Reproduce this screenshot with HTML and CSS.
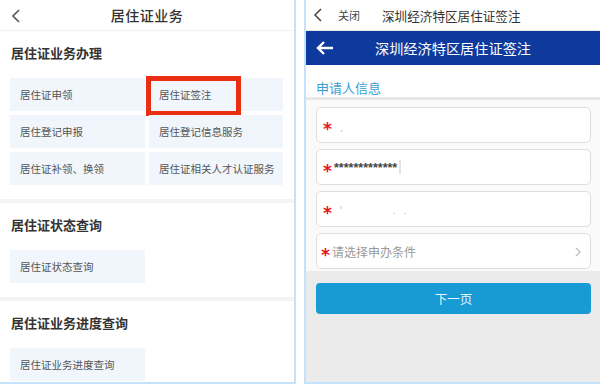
FILE: index.html
```html
<!DOCTYPE html>
<html lang="zh-CN">
<head>
    <meta charset="UTF-8">
    <meta name="viewport" content="width=device-width, initial-scale=1.0">
    <title>居住证业务</title>
    <link rel="stylesheet" href="styles.css">
</head>
<body>
    <div class="panel panel-left">
        <div class="topbar">
            <svg class="back" width="10" height="14" viewBox="0 0 10 14"><path d="M8 1 L2 7 L8 13" fill="none" stroke="#555" stroke-width="1.6"/></svg>
            <h1>居住证业务</h1>
        </div>

        <div class="section">
            <h2>居住证业务办理</h2>
            <div class="grid">
                <div class="cell">居住证申领</div>
                <div class="cell highlight">居住证签注<span class="mark"></span></div>
                <div class="cell">居住登记申报</div>
                <div class="cell">居住登记信息服务</div>
                <div class="cell">居住证补领、换领</div>
                <div class="cell">居住证相关人才认证服务</div>
            </div>
        </div>
        <div class="divider"></div>

        <div class="section">
            <h2>居住证状态查询</h2>
            <div class="grid">
                <div class="cell">居住证状态查询</div>
            </div>
        </div>
        <div class="divider"></div>

        <div class="section last">
            <h2>居住证业务进度查询</h2>
            <div class="grid">
                <div class="cell">居住证业务进度查询</div>
            </div>
        </div>
    </div>

    <div class="panel panel-right">
        <div class="navbar">
            <svg class="back" width="10" height="14" viewBox="0 0 10 14"><path d="M8 1 L2 7 L8 13" fill="none" stroke="#444" stroke-width="1.5"/></svg>
            <span class="close">关闭</span>
            <span class="nav-title">深圳经济特区居住证签注</span>
        </div>
        <div class="bluebar">
            <svg class="arrow" width="18" height="14" viewBox="0 0 18 14"><path d="M17 7 H2 M8 1 L2 7 L8 13" fill="none" stroke="#fff" stroke-width="2.4"/></svg>
            <span>深圳经济特区居住证签注</span>
        </div>
        <div class="info-head">申请人信息</div>
        <div class="form">
            <div class="field"><span class="star">*</span><span class="blur">ˏ</span></div>
            <div class="field"><span class="star">*</span><span class="masked">*************</span><span class="caret"></span></div>
            <div class="field"><span class="star">*</span><span class="blur">ˈ&nbsp;&nbsp;&nbsp;&nbsp;&nbsp;&nbsp;&nbsp;&nbsp;&nbsp;&nbsp;&nbsp;&nbsp;&nbsp;&nbsp;&nbsp;&nbsp;&nbsp;&nbsp;&nbsp;﹒﹒</span></div>
            <div class="field select"><span class="star">*</span><span class="placeholder">请选择申办条件</span>
                <svg class="chev" width="6" height="10" viewBox="0 0 6 10"><path d="M1 1 L5 5 L1 9" fill="none" stroke="#bbb" stroke-width="1.2"/></svg>
            </div>
        </div>
        <div class="actions">
            <button class="next">下一页</button>
        </div>
    </div>
</body>
</html>
```

FILE: styles.css
```css
* {
    margin: 0;
    padding: 0;
    box-sizing: border-box;
}

body {
    width: 600px;
    height: 384px;
    display: flex;
    gap: 8px;
    background: #fff;
    font-family: 'Noto Sans CJK SC', 'Noto Sans', sans-serif;
    color: #333;
    overflow: hidden;
}

.panel {
    height: 384px;
    border-bottom: 2px solid #c4e2fb;
    display: flex;
    flex-direction: column;
}

.panel-left {
    width: 296px;
    border-right: 2px solid #c4e2fb;
}

.panel-right {
    width: 296px;
    border-left: 2px solid #c4e2fb;
    background: #ebebeb;
}

/* left panel */
.topbar {
    height: 31px;
    border-bottom: 1px solid #f1f1f1;
    position: relative;
    display: flex;
    align-items: center;
    justify-content: center;
}

.topbar .back {
    position: absolute;
    left: 11px;
    top: 9px;
}

.topbar h1 {
    font-size: 14px;
    font-weight: 500;
    color: #333;
    letter-spacing: 0.5px;
}

.section {
    padding: 12px 11px 14px 10px;
}

.section.last {
    padding-bottom: 0;
}

.section h2 {
    font-size: 13px;
    font-weight: 700;
    color: #333;
    line-height: 20px;
    margin-bottom: 15px;
    padding-left: 1px;
}

.grid {
    display: grid;
    grid-template-columns: 135px 134px;
    grid-auto-rows: 33px;
    gap: 4px;
}

.cell {
    background: #f0f6fc;
    font-size: 10.5px;
    color: #555;
    display: flex;
    align-items: center;
    padding-left: 10px;
    position: relative;
}

.mark {
    position: absolute;
    left: -3px;
    top: -2px;
    width: 95px;
    height: 40px;
    border: 5px solid #ea2e12;
}

.divider {
    height: 4px;
    background: #f3f3f3;
}

/* right panel */
.navbar {
    height: 31px;
    background: #fff;
    border-bottom: 1px solid #e6e6e6;
    display: flex;
    align-items: center;
    padding-left: 7px;
}

.navbar .close {
    font-size: 11px;
    color: #444;
    margin-left: 15px;
}

.navbar .nav-title {
    font-size: 12.6px;
    color: #333;
    margin-left: 22px;
}

.bluebar {
    height: 34px;
    background: #0d3a9c;
    color: #fff;
    display: flex;
    align-items: center;
    justify-content: center;
    position: relative;
    font-size: 14.2px;
}

.bluebar .arrow {
    position: absolute;
    left: 10px;
    top: 10px;
}

.info-head {
    height: 35px;
    background: #fff;
    color: #3c9ed6;
    font-size: 13px;
    padding: 15px 0 0 10px;
    line-height: 16px;
    border-bottom: 3px solid #e8e8e8;
}

.form {
    background: #fafafa;
    padding: 7px 9px 2px 10px;
    display: flex;
    flex-direction: column;
    gap: 6px;
}

.field {
    height: 36px;
    background: #fff;
    border: 1px solid #dedede;
    border-radius: 5px;
    display: flex;
    align-items: center;
    padding-left: 6px;
    position: relative;
}

.star {
    color: #e8141a;
    font-family: 'DejaVu Sans', sans-serif;
    font-weight: 700;
    font-size: 17px;
    width: 11px;
    margin-top: 7px;
}

.blur {
    color: #c8c8c8;
    font-size: 11px;
    margin-left: 6px;
}

.masked {
    font-family: 'Liberation Sans', sans-serif;
    font-weight: 700;
    font-size: 12.5px;
    color: #444;
    margin-top: 2px;
}

.caret {
    width: 2px;
    height: 14px;
    background: #e4e4e4;
    margin-left: 2px;
}

.placeholder {
    font-size: 12px;
    color: #9a9a9a;
}

.select .star {
    margin-left: -2px;
}

.chev {
    position: absolute;
    right: 9px;
    top: 13px;
}

.actions {
    padding: 12px 9px 0 10px;
}

.next {
    width: 100%;
    height: 31px;
    border: none;
    border-radius: 4px;
    background: #189bd5;
    color: #e6f4fb;
    font-family: 'Noto Sans CJK SC', 'Noto Sans', sans-serif;
    font-size: 12.5px;
}
```
